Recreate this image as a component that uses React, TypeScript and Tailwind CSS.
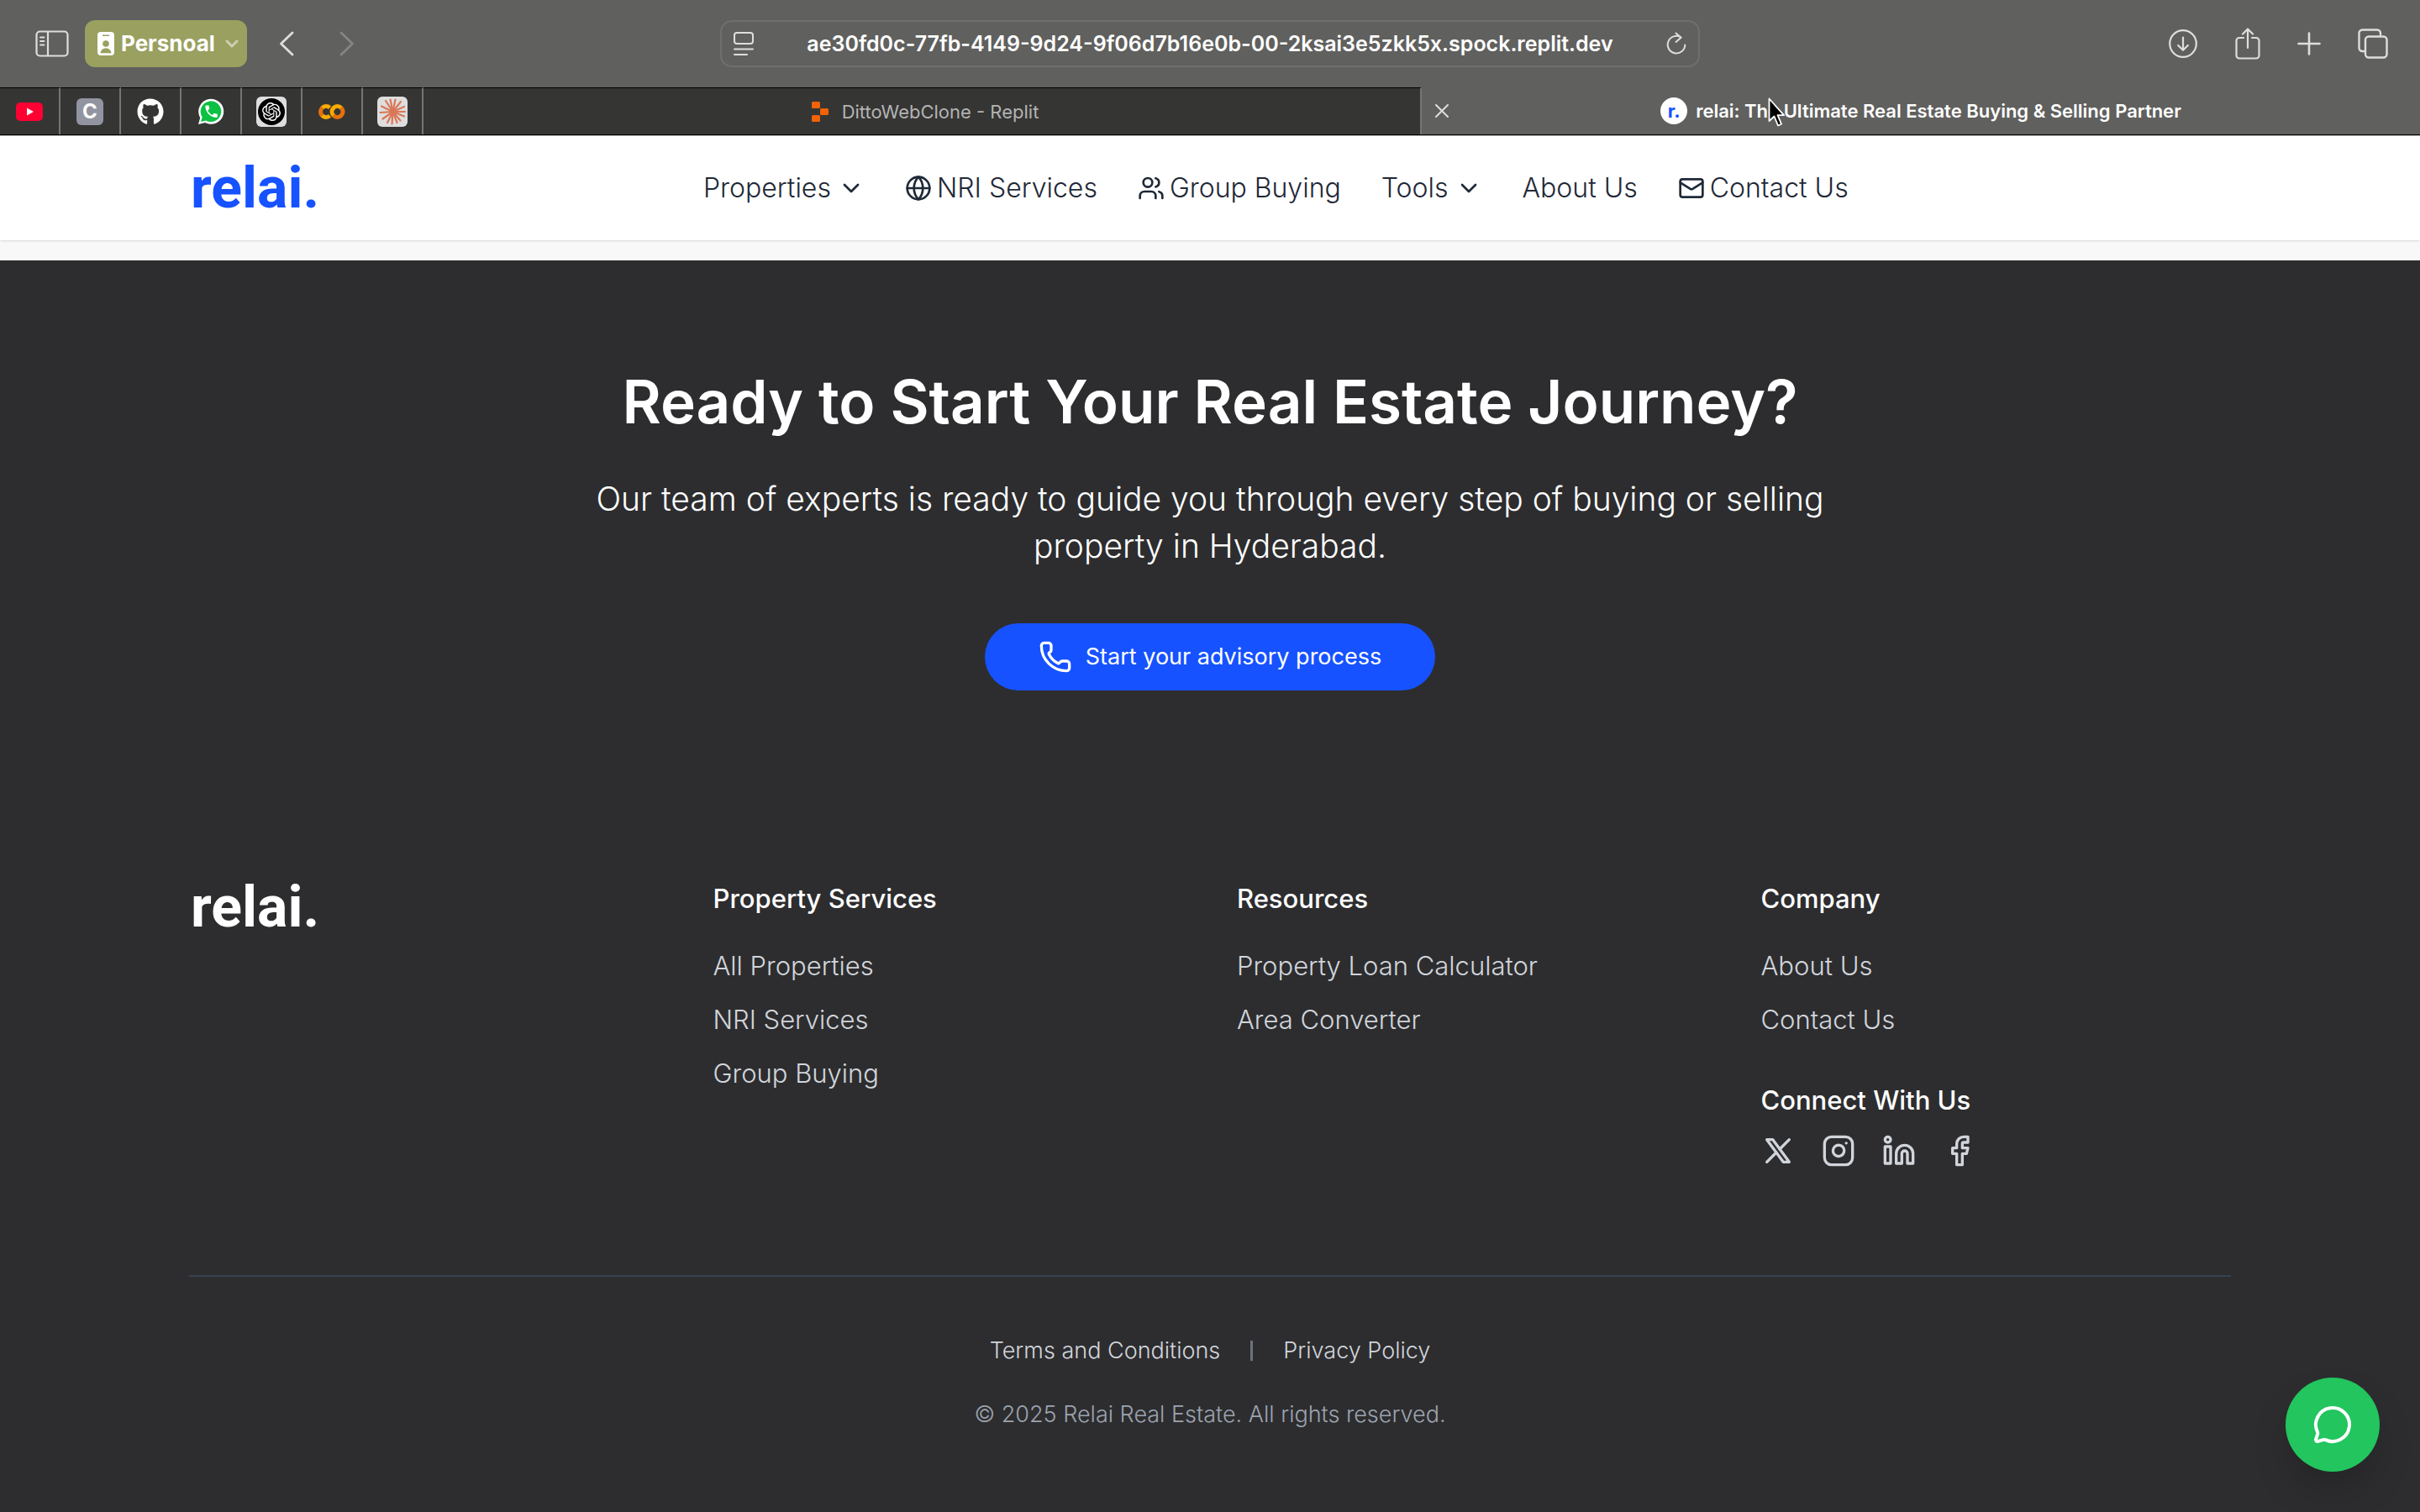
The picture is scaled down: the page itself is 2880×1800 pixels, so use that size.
import type { ReactNode } from "react";
import { ChevronDown, Facebook, Globe, Instagram, Linkedin, Mail, MessageCircle, Phone, Users } from "lucide-react";
import { FaGithub } from "react-icons/fa";
import { SiOpenai } from "react-icons/si";

function YoutubeIcon() {
  return (
    <svg viewBox="0 0 32 22" className="h-[22px] w-8">
      <rect width="32" height="22" rx="5" fill="#ff0033" />
      <path d="M13 6.5v9l8-4.5z" fill="#fff" />
    </svg>
  );
}

function WhatsappIcon() {
  return (
    <svg viewBox="0 0 32 32" className="size-8">
      <path d="M1 31l2.2-7.8A15 15 0 1 1 9 28.9z" fill="#fff" />
      <path d="M4 28l1.7-5.6A12.3 12.3 0 1 1 10 26.4z" fill="#0dc143" />
      <g transform="translate(7 6) scale(0.8)">
        <path
          fill="#fff"
          d="M6.62 10.79c1.44 2.83 3.76 5.14 6.59 6.59l2.2-2.2c.27-.27.67-.36 1.02-.24 1.12.37 2.33.57 3.57.57.55 0 1 .45 1 1V20c0 .55-.45 1-1 1-9.39 0-17-7.61-17-17 0-.55.45-1 1-1h3.5c.55 0 1 .45 1 1 0 1.25.2 2.45.57 3.57.11.35.03.74-.25 1.02l-2.2 2.2z"
        />
      </g>
    </svg>
  );
}

function ColabIcon() {
  return (
    <svg viewBox="0 0 32 20" className="h-5 w-8" fill="none" strokeWidth="5">
      <path d="M13.5 5.2A6.5 6.5 0 0 0 4.4 5.4" stroke="#f9ab00" />
      <path d="M4.4 5.4a6.5 6.5 0 0 0 0 9.2" stroke="#e8710a" />
      <path d="M4.4 14.6a6.5 6.5 0 0 0 9.1 .2" stroke="#f9ab00" />
      <path d="M17.9 14.6a6.5 6.5 0 0 1 9.2-9.2" stroke="#f9ab00" />
      <path d="M27.1 5.4a6.5 6.5 0 0 1-9.2 9.2" stroke="#e8710a" />
    </svg>
  );
}

function ClaudeIcon() {
  const rays = [
    [33, 18], [32, 23.5], [27.5, 28.5], [23.5, 31], [17.5, 32.5], [12, 31], [6.5, 26.5], [3.5, 19],
    [5, 11.5], [10, 5], [15.5, 3.5], [21.5, 3.5], [28, 6], [32, 12],
  ];
  return (
    <svg viewBox="0 0 36 36" className="size-9" stroke="#d97757" strokeWidth="2.2" strokeLinecap="round">
      <rect width="36" height="36" rx="6" fill="#dedede" stroke="none" />
      {rays.map(([x, y]) => (
        <line key={`${x}-${y}`} x1="18.5" y1="18" x2={x} y2={y} />
      ))}
      <circle cx="18.5" cy="18" r="3" fill="#d97757" stroke="none" />
    </svg>
  );
}

function ReplitIcon() {
  return (
    <svg viewBox="0 0 20 24" className="h-6 w-5" fill="#f26207">
      <rect x="0" y="0" width="10" height="8" rx="1.5" />
      <rect x="10" y="8" width="10" height="8" rx="1.5" />
      <rect x="0" y="16" width="10" height="8" rx="1.5" />
    </svg>
  );
}

function SidebarIcon() {
  return (
    <svg viewBox="0 0 40 32" className="h-8 w-10" fill="none" stroke="currentColor" strokeWidth="2.2" strokeLinecap="round">
      <rect x="1.5" y="1.5" width="37" height="29" rx="4" />
      <path d="M15 2v28" />
      <path d="M6 8.5h4.5M6 13h4.5M6 17.5h4.5" strokeWidth="1.8" />
    </svg>
  );
}

function BadgeIcon() {
  return (
    <svg viewBox="0 0 20 28" className="h-7 w-5">
      <rect width="20" height="28" rx="4" fill="#fff" />
      <path d="M6.5 4.2h7" stroke="#9aa05f" strokeWidth="1.6" strokeLinecap="round" />
      <circle cx="10" cy="14" r="3.8" fill="#9aa05f" />
      <path d="M3.5 25.2c.5-4 3-5.8 6.5-5.8s6 1.8 6.5 5.8z" fill="#9aa05f" />
    </svg>
  );
}

function Chevron({ left = false }: { left?: boolean }) {
  return (
    <svg viewBox="0 0 18 30" className="h-[30px] w-[18px]" fill="none" stroke="currentColor" strokeWidth="2.8" strokeLinecap="round" strokeLinejoin="round">
      <path d={left ? "M16 2 2.5 15 16 28" : "M2 2l13.5 13L2 28"} />
    </svg>
  );
}

function PageIcon() {
  return (
    <svg viewBox="0 0 24 28" className="h-7 w-6" fill="none" stroke="currentColor" strokeWidth="2" strokeLinecap="round">
      <rect x="1" y="1" width="22" height="13" rx="3" />
      <path d="M1 20.5h22M1 27h15" />
    </svg>
  );
}

function ReloadIcon() {
  return (
    <svg viewBox="0 0 24 28" className="h-7 w-6" fill="none" stroke="currentColor" strokeWidth="2" strokeLinecap="round" strokeLinejoin="round">
      <path d="M17.5 6.5A10.3 10.3 0 1 0 22.3 15.5" />
      <path d="M11.5 1.5l6 5.2-6 5.2" />
    </svg>
  );
}

function DownloadIcon() {
  return (
    <svg viewBox="0 0 36 36" className="size-9" fill="none" stroke="currentColor" strokeWidth="2.2" strokeLinecap="round" strokeLinejoin="round">
      <circle cx="18" cy="18" r="15.8" />
      <path d="M18 10.5v15M12.2 20l5.8 5.8 5.8-5.8" />
    </svg>
  );
}

function ShareIcon() {
  return (
    <svg viewBox="0 0 30 38" className="h-[38px] w-[30px]" fill="none" stroke="currentColor" strokeWidth="2.2" strokeLinecap="round" strokeLinejoin="round">
      <path d="M10 12H5a3.5 3.5 0 0 0-3.5 3.5V33A3.5 3.5 0 0 0 5 36.5h20a3.5 3.5 0 0 0 3.5-3.5V15.5A3.5 3.5 0 0 0 25 12h-5" />
      <path d="M15 24V2M9 7.5l6-6 6 6" />
    </svg>
  );
}

function PlusIcon() {
  return (
    <svg viewBox="0 0 28 28" className="size-7" stroke="currentColor" strokeWidth="2.6" strokeLinecap="round">
      <path d="M14 1.5v25M1.5 14h25" />
    </svg>
  );
}

function TabsIcon() {
  return (
    <svg viewBox="0 0 36 36" className="size-9" fill="none" stroke="currentColor" strokeWidth="2.4" strokeLinecap="round">
      <path d="M7.5 27H5.5A4 4 0 0 1 1.5 23V5.5A4 4 0 0 1 5.5 1.5H23A4 4 0 0 1 27 5.5V7.5" />
      <rect x="9" y="9.5" width="25.5" height="25" rx="4" />
    </svg>
  );
}

function PointerIcon() {
  return (
    <svg viewBox="0 0 20 36" className="h-9 w-5">
      <path d="M1.5 1.5v26.5l6-5.5 4.5 11 4-1.8-4.5-10.5h7.5z" fill="#000" stroke="#fff" strokeWidth="1.8" strokeLinejoin="round" />
    </svg>
  );
}

function XBrandIcon() {
  return (
    <svg viewBox="0 0 24 24" className="size-10" fill="none" stroke="currentColor" strokeWidth="2" strokeLinecap="round" strokeLinejoin="round">
      <path d="M4 4l11.733 16H20L8.267 4z" />
      <path d="M4 20l6.768-6.768M13.228 10.772L20 4" />
    </svg>
  );
}

function IconButton({ label, children, className = "" }: { label: string; children: ReactNode; className?: string }) {
  return (
    <button type="button" aria-label={label} className={`flex shrink-0 items-center justify-center ${className}`}>
      {children}
    </button>
  );
}

const pinnedTabs: { label: string; icon: ReactNode }[] = [
  { label: "YouTube", icon: <YoutubeIcon /> },
  {
    label: "C",
    icon: <span className="flex size-8 items-center justify-center rounded-md bg-[#9294a1] text-[24px] leading-8 font-bold text-white">C</span>,
  },
  { label: "GitHub", icon: <FaGithub className="size-8 text-white" /> },
  { label: "WhatsApp", icon: <WhatsappIcon /> },
  {
    label: "ChatGPT",
    icon: (
      <span className="flex size-9 items-center justify-center rounded-md bg-[#dedede]">
        <span className="flex size-8 items-center justify-center rounded-full bg-black">
          <SiOpenai className="size-[22px] text-white" />
        </span>
      </span>
    ),
  },
  { label: "Colab", icon: <ColabIcon /> },
  { label: "Claude", icon: <ClaudeIcon /> },
];

function BrowserChrome() {
  return (
    <div className="bg-[#60605e] text-[#dededd]">
      <div className="grid h-[104px] grid-cols-[1fr_40.5%_1fr] items-center">
        <div className="flex items-center pl-[42px]">
          <IconButton label="Toggle sidebar">
            <SidebarIcon />
          </IconButton>
          <button type="button" className="ml-[19px] flex h-14 items-center rounded-xl bg-[#9aa05f] pr-1.5 pl-[15px] text-[26px] leading-8 font-bold text-white">
            <BadgeIcon />
            <span className="mr-2 ml-2">Persnoal</span>
            <ChevronDown className="size-6 text-[#cdd0ae]" strokeWidth={3} />
          </button>
          <IconButton label="Back" className="ml-[38px]">
            <Chevron left />
          </IconButton>
          <IconButton label="Forward" className="ml-[54px] text-[#858584]">
            <Chevron />
          </IconButton>
        </div>
        <div className="flex h-14 items-center rounded-[14px] border-2 border-[#6f6f6d] px-3.5">
          <IconButton label="Page settings">
            <PageIcon />
          </IconButton>
          <input
            type="text"
            aria-label="Address"
            defaultValue="ae30fd0c-77fb-4149-9d24-9f06d7b16e0b-00-2ksai3e5zkk5x.spock.replit.dev"
            className="min-w-0 flex-1 bg-transparent text-center text-[25px] leading-8 font-semibold text-white outline-none"
          />
          <IconButton label="Reload">
            <ReloadIcon />
          </IconButton>
        </div>
        <div className="flex items-center justify-end gap-11 pr-[38px]">
          <IconButton label="Downloads">
            <DownloadIcon />
          </IconButton>
          <IconButton label="Share">
            <ShareIcon />
          </IconButton>
          <IconButton label="New tab">
            <PlusIcon />
          </IconButton>
          <IconButton label="Show all tabs">
            <TabsIcon />
          </IconButton>
        </div>
      </div>
      <div className="grid h-[57px] grid-cols-[repeat(7,72px)_1fr_1fr] border-b border-black">
        {pinnedTabs.map((tab) => (
          <IconButton key={tab.label} label={tab.label} className="border-t border-r-2 border-t-black border-r-[#757574] bg-[#353534]">
            {tab.icon}
          </IconButton>
        ))}
        <button type="button" className="flex items-center justify-center gap-4 border-t border-r-2 border-t-black border-r-[#757574] bg-[#353534] pl-2 text-[22px] leading-8 text-[#b3b3b2]">
          <ReplitIcon />
          DittoWebClone - Replit
        </button>
        <div className="relative flex items-center justify-center">
          <button type="button" aria-label="Close tab" className="absolute left-4">
            <svg viewBox="0 0 16 16" className="size-4" stroke="currentColor" strokeWidth="2" strokeLinecap="round">
              <path d="M1 1l14 14M15 1L1 15" />
            </svg>
          </button>
          <button type="button" className="relative flex items-center gap-2.5 text-[22px] leading-8 font-semibold text-white">
            <span className="flex size-8 items-center justify-center rounded-full bg-white font-bold text-[#1652ff]">r.</span>
            relai: The Ultimate Real Estate Buying &amp; Selling Partner
            <span className="absolute top-0 left-32">
              <PointerIcon />
            </span>
          </button>
        </div>
      </div>
    </div>
  );
}

const navItems: { label: string; icon?: ReactNode; menu?: boolean }[] = [
  { label: "Properties", menu: true },
  { label: "NRI Services", icon: <Globe className="size-8" /> },
  { label: "Group Buying", icon: <Users className="size-8" /> },
  { label: "Tools", menu: true },
  { label: "About Us" },
  { label: "Contact Us", icon: <Mail className="size-8" /> },
];

function SiteHeader() {
  return (
    <header className="relative flex items-center border-t border-[#b0b0b0] bg-white px-[225px] py-7 text-[#1f2937] shadow-sm">
      <a href="#home" className="w-[612px] shrink-0 pl-0.5 font-['Roboto',sans-serif] text-[68px] leading-[68px] font-bold text-[#1652ff]">
        relai.
      </a>
      <nav className="flex items-center gap-12 text-[32px] leading-[48px] font-light whitespace-nowrap">
        {navItems.map((item) =>
          item.menu ? (
            <button key={item.label} type="button" className="flex items-center gap-2">
              {item.label}
              <ChevronDown className="size-8" />
            </button>
          ) : (
            <a key={item.label} href="#nav" className="flex items-center gap-1.5">
              {item.icon}
              {item.label}
            </a>
          ),
        )}
      </nav>
    </header>
  );
}

function FooterColumn({ title, links, children }: { title: string; links: string[]; children?: ReactNode }) {
  return (
    <div>
      <h3 className="text-[31px] leading-[48px] font-medium">{title}</h3>
      <ul className="mt-8 flex flex-col gap-4 text-[31px] leading-[48px] font-light text-[#d1d5db]">
        {links.map((link) => (
          <li key={link}>
            <a href="#link">{link}</a>
          </li>
        ))}
      </ul>
      {children}
    </div>
  );
}

export default function App() {
  return (
    <div className="flex min-h-screen flex-col bg-[#2d2d2f] font-['Inter',sans-serif] text-white">
      <BrowserChrome />
      <SiteHeader />
      <div className="h-6 bg-[#f8f8f8]" />

      <section className="flex flex-col items-center px-[225px] py-32 text-center">
        <h2 className="text-[71px] leading-[80px] font-semibold">Ready to Start Your Real Estate Journey?</h2>
        <p className="mt-12 max-w-[1536px] text-[39px] leading-[56px] font-light">
          Our team of experts is ready to guide you through every step of buying or selling property in Hyderabad.
        </p>
        <button type="button" className="mt-16 flex h-20 items-center gap-4 rounded-full bg-[#1652ff] px-16 text-[27px] leading-10">
          <Phone className="size-10" />
          Start your advisory process
        </button>
      </section>

      <footer className="px-[225px] py-24">
        <div className="grid grid-cols-4 gap-16">
          <a href="#home" className="pl-0.5 font-['Roboto',sans-serif] text-[68px] leading-[68px] font-bold">
            relai.
          </a>
          <FooterColumn title="Property Services" links={["All Properties", "NRI Services", "Group Buying"]} />
          <FooterColumn title="Resources" links={["Property Loan Calculator", "Area Converter"]} />
          <FooterColumn title="Company" links={["About Us", "Contact Us"]}>
            <h3 className="mt-12 text-[31px] leading-[48px] font-medium">Connect With Us</h3>
            <div className="mt-4 flex gap-8 text-[#d1d5db]">
              <a href="#x" aria-label="X">
                <XBrandIcon />
              </a>
              <a href="#instagram" aria-label="Instagram">
                <Instagram className="size-10" />
              </a>
              <a href="#linkedin" aria-label="LinkedIn">
                <Linkedin className="size-10" />
              </a>
              <a href="#facebook" aria-label="Facebook">
                <Facebook className="size-10" />
              </a>
            </div>
          </FooterColumn>
        </div>
        <div className="mt-32 flex flex-col items-center border-t-2 border-[#374151] pt-16">
          <div className="flex items-center gap-9 text-[27px] leading-[48px] font-light text-[#d1d5db]">
            <a href="#terms">Terms and Conditions</a>
            <span className="h-6 w-[3px] bg-[#6b7280]" />
            <a href="#privacy">Privacy Policy</a>
          </div>
          <p className="mt-8 text-[27px] leading-10 font-light text-[#9ca3af]">© 2025 Relai Real Estate. All rights reserved.</p>
        </div>
      </footer>

      <button type="button" aria-label="Chat" className="fixed right-12 bottom-12 flex size-28 items-center justify-center rounded-full bg-[#22c55e] shadow-2xl">
        <MessageCircle className="size-12" />
      </button>
    </div>
  );
}
